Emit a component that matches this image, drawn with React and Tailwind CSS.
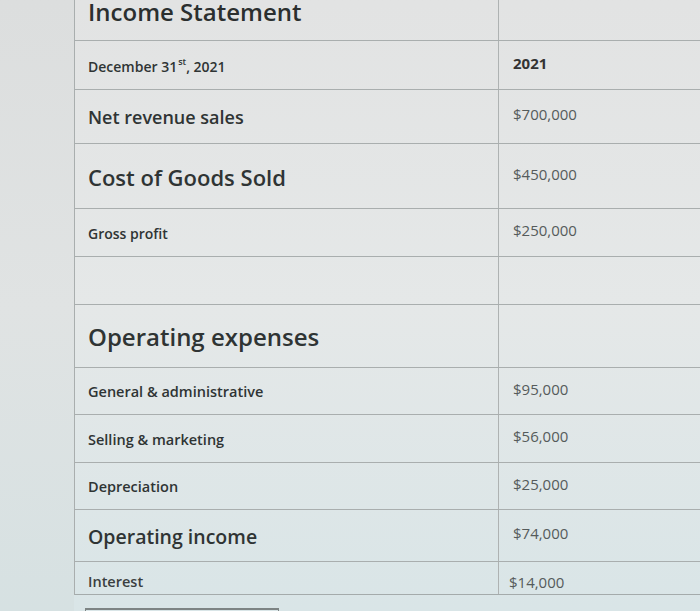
const rows = [
  { label: 'December 31', sup: 'st', tail: ', 2021', value: '2021', h: 'h-[49px]', size: 'text-[14px]', valueBold: true },
  { label: 'Net revenue sales', value: '$700,000', h: 'h-[54px]', size: 'text-[18px]' },
  { label: 'Cost of Goods Sold', value: '$450,000', h: 'h-[65px]', size: 'text-[22px]' },
  { label: 'Gross profit', value: '$250,000', h: 'h-[48px]', size: 'text-[14px]' },
  { label: '', value: '', h: 'h-[48px]', size: 'text-[14px]' },
  { label: 'Operating expenses', value: '', h: 'h-[63px]', size: 'text-[24px]' },
  { label: 'General & administrative', value: '$95,000', h: 'h-[47px]', size: 'text-[14.5px]' },
  { label: 'Selling & marketing', value: '$56,000', h: 'h-[48px]', size: 'text-[14.5px]' },
  { label: 'Depreciation', value: '$25,000', h: 'h-[47px]', size: 'text-[14.5px]' },
  { label: 'Operating income', value: '$74,000', h: 'h-[52px]', size: 'text-[19.5px]' },
]

function Row({ row }) {
  return (
    <div className={`grid grid-cols-[424px_1fr] border-b border-[#a9aeae] ${row.h}`}>
      <div className={`flex items-center pl-[13px] pt-[2px] border-r border-[#aeb2b2] font-semibold text-[#2f3434] ${row.size}`}>
        {row.label}
        {row.sup && <sup className="text-[9px] ml-[1px]">{row.sup}</sup>}
        {row.tail}
      </div>
      <div
        className={`flex items-center pl-[14px] pb-[4px] text-[15px] ${
          row.valueBold ? 'font-bold text-[14px] text-[#333]' : 'text-[#555b5b]'
        }`}
      >
        {row.value}
      </div>
    </div>
  )
}

export default function App() {
  return (
    <div
      className="w-[700px] h-[611px] overflow-hidden flex items-start bg-linear-to-b from-[#e2e3e3] via-[#e5e8e8] to-[#d9e5e7]"
      style={{ fontFamily: '"Open Sans", "Noto Sans", sans-serif' }}
    >
      <div className="w-[74px] h-[611px] shrink-0 bg-linear-to-b from-[#dcdede] via-[#e0e3e3] to-[#d6e1e2]" />
      <div className="flex-1 flex flex-col -mt-[13px]">
        <div className="shrink-0 grid grid-cols-[424px_1fr] h-[54px] border-b border-l border-[#a9aeae]">
          <div className="flex items-start pl-[13px] pt-[13px] border-r border-[#aeb2b2] font-semibold text-[24px] text-[#2b2f2f] leading-[24px]">
            Income Statement
          </div>
          <div />
        </div>
        <div className="shrink-0 border-l border-[#a9aeae]">
          {rows.map((row, i) => (
            <Row key={i} row={row} />
          ))}
          <div className="grid grid-cols-[424px_1fr] h-[33px] border-b border-[#a4abab]">
            <div className="flex items-end pb-[1px] pl-[13px] border-r border-[#aeb2b2] font-semibold text-[14.5px] text-[#3a3f3f]">
              Interest
            </div>
            <div className="flex items-end pl-[10px] pb-[1px] text-[15px] text-[#555b5b]">$14,000</div>
          </div>
        </div>
        <div className="shrink-0 pt-[13px] pl-[11px]">
          <div className="w-[194px] h-[6px] border-t-2 border-x border-[#7d8484]" />
        </div>
      </div>
    </div>
  )
}
